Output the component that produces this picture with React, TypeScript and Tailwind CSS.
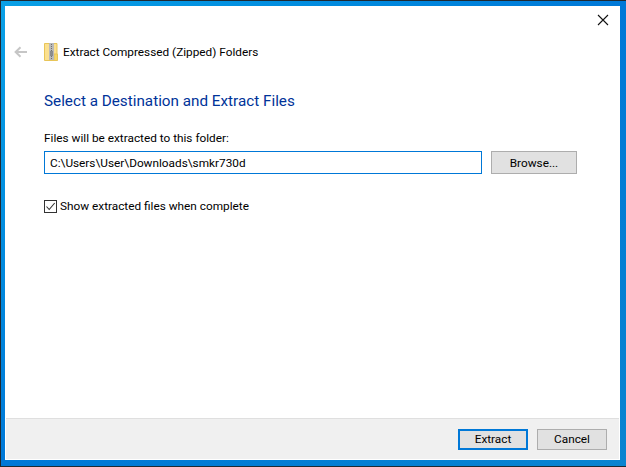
const font = { fontFamily: 'Roboto, sans-serif' }

function ZipIcon() {
  return (
    <svg width="14" height="18" viewBox="0 0 14 18">
      <path d="M0.5 0.5H13V17.5H0.5Z" fill="#fbe08f" stroke="#e8c558" />
      <path d="M10 11H13.5V17.5H10Z" fill="#f5d568" stroke="#e8c558" />
      <rect x="5" y="0" width="5" height="17" fill="#b9b9b9" />
      <path d="M7.5 1V16" stroke="#6f6f6f" strokeDasharray="1 1" />
      <rect x="6" y="8" width="3" height="5" fill="#8c8c8c" />
    </svg>
  )
}

export default function App() {
  return (
    <div
      className="flex h-[467px] w-[626px] border-t border-b border-l border-[#1f2a33] bg-gradient-to-br from-[#0aa0e6] via-[#0078d7] to-[#0a84d0] pt-[5px] pr-[6px] pb-[6px] pl-[4px] text-[11.8px] text-[#000]"
      style={font}
    >
      <div className="flex flex-1 flex-col bg-white p-px pt-0">
        <div className="flex flex-1 flex-col">
          <div className="flex justify-end pt-[8px] pr-[10px]">
            <svg width="12" height="12" viewBox="0 0 12 12">
              <path d="M1 1L11 11M11 1L1 11" stroke="#111" strokeWidth="1.1" fill="none" />
            </svg>
          </div>
          <div className="mt-[17px] flex h-[18px] items-center pl-[8px]">
            <svg width="14" height="12" viewBox="0 0 14 12" className="mr-[16px]">
              <path d="M13 6H2M6.5 1.2L1.6 6L6.5 10.8" stroke="#c6c6c6" strokeWidth="2" fill="none" />
            </svg>
            <ZipIcon />
            <span className="ml-[5px] leading-[18px]">Extract Compressed (Zipped) Folders</span>
          </div>
          <div className="pl-[38px]">
            <h1 className="mt-[30px] text-[15.25px] leading-[20px] font-normal text-[#003399]">
              Select a Destination and Extract Files
            </h1>
            <div className="mt-[19px] leading-[16px]">Files will be extracted to this folder:</div>
            <div className="mt-[5px] flex">
              <div className="flex h-[23px] w-[438px] items-center border border-[#0078d7] pl-[5px] leading-[16px]">
                C:\Users\User\Downloads\smkr730d
              </div>
              <button className="ml-[9px] h-[23px] w-[86px] border border-[#adadad] bg-[#e1e1e1] leading-[16px]">
                Browse...
              </button>
            </div>
            <label className="mt-[24px] flex h-[16px] items-center">
              <span className="flex h-[13px] w-[13px] items-center justify-center border border-[#333]">
                <svg width="11" height="11" viewBox="0 0 11 11">
                  <path d="M1.5 5.5L4.2 8.5L9.7 2" stroke="#333" strokeWidth="1.1" fill="none" />
                </svg>
              </span>
              <span className="ml-[3px] pt-px">Show extracted files when complete</span>
            </label>
          </div>
        </div>
        <div className="flex h-[41px] items-center justify-end border-t border-[#dfdfdf] bg-[#f0f0f0] pr-[12px]">
          <button className="h-[21px] w-[70px] border-2 border-[#0078d7] bg-[#e1e1e1] leading-[16px]">Extract</button>
          <button className="ml-[9px] h-[21px] w-[70px] border border-[#adadad] bg-[#e1e1e1] leading-[16px]">Cancel</button>
        </div>
      </div>
    </div>
  )
}
